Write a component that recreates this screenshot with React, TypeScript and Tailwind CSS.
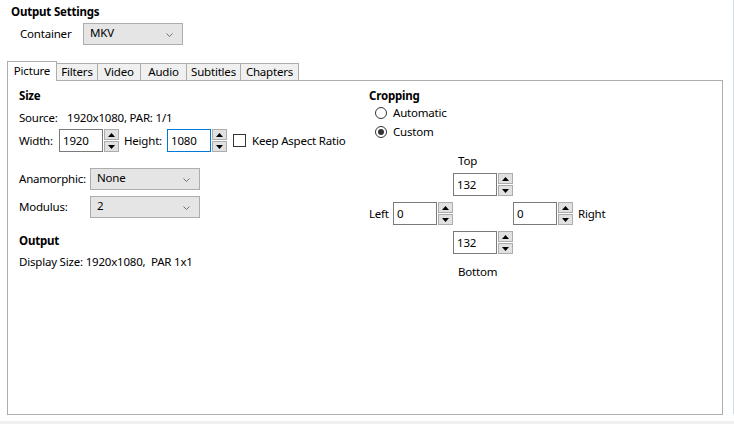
import React from "react";

function Arrow({ up }: { up: boolean }) {
  return (
    <svg width="7" height="4" viewBox="0 0 7 4">
      {up ? <polygon points="0,4 7,4 3.5,0" fill="#000" /> : <polygon points="0,0 7,0 3.5,4" fill="#000" />}
    </svg>
  );
}

function Spinner() {
  return (
    <div className="ml-[1px] flex w-[15px] flex-col gap-[1px]">
      <div className="flex h-[11px] items-center justify-center border border-[#acacac] bg-[#e1e1e1]">
        <Arrow up />
      </div>
      <div className="flex h-[11px] items-center justify-center border border-[#acacac] bg-[#e1e1e1]">
        <Arrow up={false} />
      </div>
    </div>
  );
}

function Spin({ value, focused = false }: { value: string; focused?: boolean }) {
  return (
    <div className="flex h-[23px]">
      <div
        className={
          focused
            ? "flex h-full w-[44px] items-center border border-[#0078d7] bg-white pl-[3px] text-black"
            : "flex h-full w-[44px] items-center border border-[#7a7a7a] bg-white pl-[3px] text-black"
        }
      >
        {value}
      </div>
      <Spinner />
    </div>
  );
}

function Chevron() {
  return (
    <svg width="7" height="4" viewBox="0 0 7 4" className="absolute right-[9px] top-[9px]">
      <polyline points="0.5,0.5 3.5,3.5 6.5,0.5" fill="none" stroke="#707070" strokeWidth="1" />
    </svg>
  );
}

function Select({ value, w }: { value: string; w: string }) {
  return (
    <div className={`relative h-[22px] border border-[#adadad] bg-[#e5e5e5] pl-[6px] pt-[1px] leading-[16px] ${w}`}>
      <span>{value}</span>
      <Chevron />
    </div>
  );
}

function Radio({ checked, label }: { checked: boolean; label: string }) {
  return (
    <div className="flex h-[16px] items-center pl-[6px]">
      <div className="flex h-[12px] w-[12px] items-center justify-center rounded-full border border-[#333] bg-white">
        {checked && <div className="h-[6px] w-[6px] rounded-full bg-[#333]" />}
      </div>
      <span className="ml-[6px]">{label}</span>
    </div>
  );
}

export default function App() {
  const tabs = [
    { name: "Filters", w: "w-[41px]" },
    { name: "Video", w: "w-[43px]" },
    { name: "Audio", w: "w-[46px]" },
    { name: "Subtitles", w: "w-[54px]" },
    { name: "Chapters", w: "w-[58px]" },
  ];
  return (
    <div className="flex h-[424px] w-[734px] flex-col overflow-hidden bg-white font-['Noto_Sans',sans-serif] text-[11.5px] leading-[16px] tracking-[-0.2px] text-black">
      <div className="flex h-[421px]">
        <div className="flex w-[733px] flex-col">
          <div className="pl-[11px] pt-[4px] font-bold">Output Settings</div>
          <div className="mt-[3px] flex items-center pl-[20px]">
            <span className="w-[63px]">Container</span>
            <Select value="MKV" w="w-[100px]" />
          </div>
          <div className="mt-[16px] flex h-[19px] items-end pl-[7px]">
            <div className="relative z-10 -mb-px flex h-[20px] w-[50px] items-start justify-center border border-b-0 border-[#adadad] bg-white pt-[1px]">
              Picture
            </div>
            {tabs.map((t) => (
              <div
                key={t.name}
                className={`flex h-[17px] items-center justify-center border-r border-t border-[#adadad] bg-[#f0f0f0] ${t.w}`}
              >
                {t.name}
              </div>
            ))}
          </div>
          <div className="ml-[7px] flex h-[335px] w-[716px] border border-[#adadad] pl-[11px]">
            <div className="flex w-[350px] flex-col pt-[7px]">
              <div className="font-bold">Size</div>
              <div className="mt-[6px] flex">
                <span className="w-[48px]">Source:</span>
                <span>1920x1080, PAR: 1/1</span>
              </div>
              <div className="mt-[3px] flex items-center">
                <span className="w-[40px]">Width:</span>
                <Spin value="1920" />
                <span className="ml-[5px] w-[43px]">Height:</span>
                <Spin value="1080" focused />
                <div className="ml-[6px] h-[13px] w-[13px] border border-[#333] bg-white" />
                <span className="ml-[6px]">Keep Aspect Ratio</span>
              </div>
              <div className="mt-[16px] flex items-center">
                <span className="w-[71px]">Anamorphic:</span>
                <Select value="None" w="w-[110px]" />
              </div>
              <div className="mt-[6px] flex items-center">
                <span className="w-[71px]">Modulus:</span>
                <Select value="2" w="w-[110px]" />
              </div>
              <div className="mt-[15px] font-bold">Output</div>
              <div className="mt-[5px]">Display Size: 1920x1080,&nbsp; PAR 1x1</div>
            </div>
            <div className="flex flex-col pt-[7px]">
              <div className="font-bold">Cropping</div>
              <div className="mt-[1px]">
                <Radio checked={false} label="Automatic" />
              </div>
              <div className="mt-[3px]">
                <Radio checked label="Custom" />
              </div>
              <div className="mt-[13px] grid grid-cols-[24px_60px_60px_60px_auto]">
                <div />
                <div />
                <div className="pl-[5px]">Top</div>
                <div />
                <div />

                <div className="col-start-3 mt-[4px]">
                  <Spin value="132" />
                </div>

                <div className="col-start-1 mt-[6px] flex items-center">Left</div>
                <div className="mt-[6px]">
                  <Spin value="0" />
                </div>
                <div />
                <div className="mt-[6px]">
                  <Spin value="0" />
                </div>
                <div className="mt-[6px] flex items-center pl-[5px]">Right</div>

                <div className="col-start-3 mt-[6px]">
                  <Spin value="132" />
                </div>

                <div className="col-start-3 mt-[10px] pl-[5px]">Bottom</div>
              </div>
            </div>
          </div>
        </div>
        <div className="h-[414px] w-[1px] bg-[#d6dee7]" />
      </div>
      <div className="h-[3px] bg-[#f0f0f0]" />
    </div>
  );
}
